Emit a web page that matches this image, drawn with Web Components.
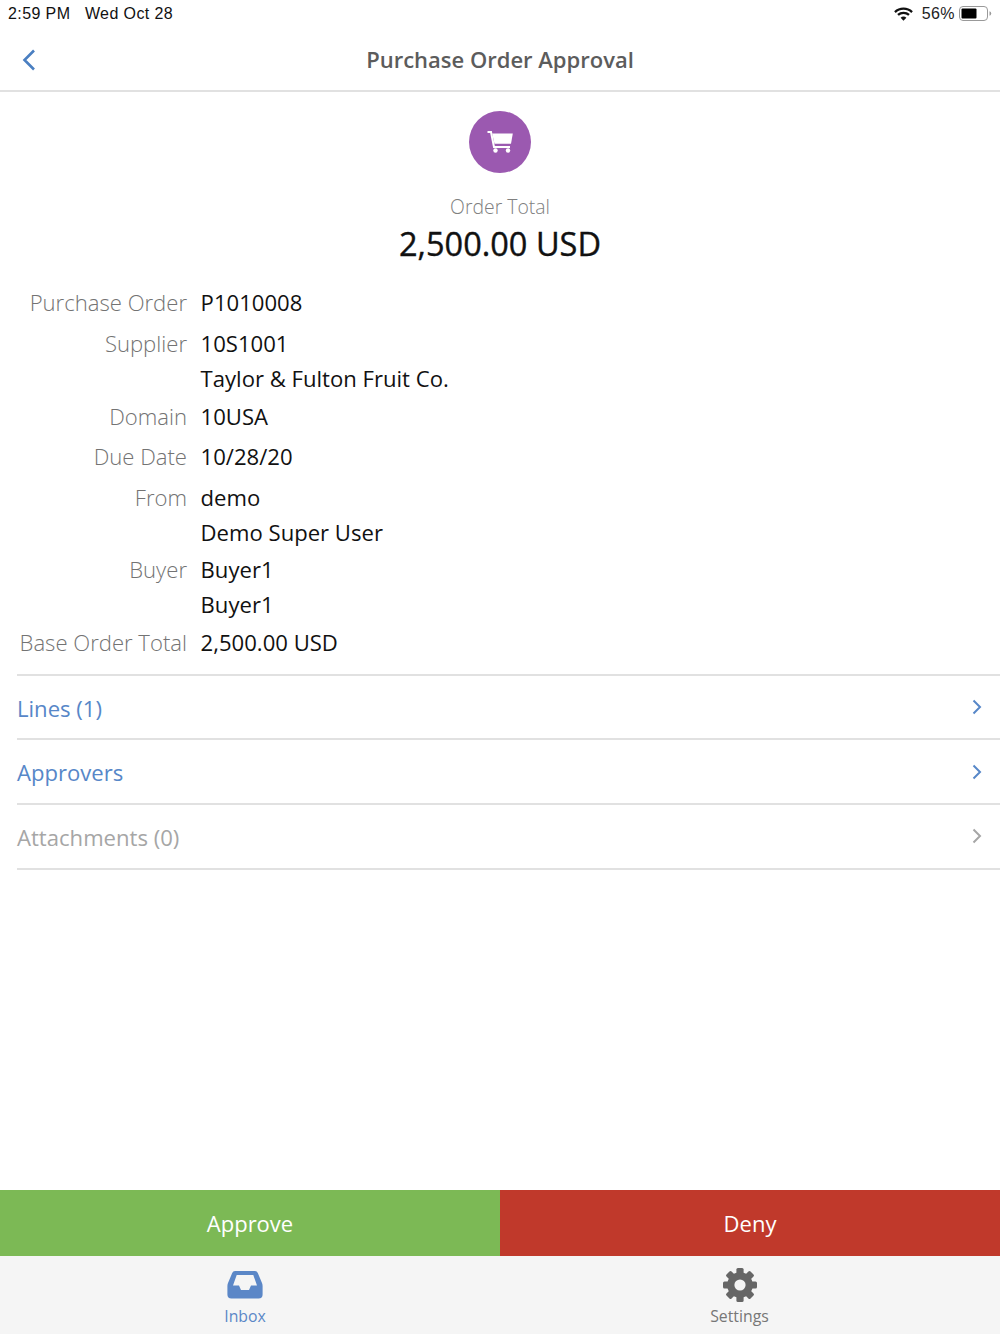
<!DOCTYPE html>
<html>
<head>
<meta charset="utf-8">
<title>Purchase Order Approval</title>
<style>
  html, body { margin: 0; height: 100%; background: #fff; }
  body { font-family: "Open Sans", sans-serif; }
  approval-screen { height: 1334px; }
</style>
</head>
<body>
<approval-screen>
  <status-bar slot="top"></status-bar>
  <nav-header slot="top" title="Purchase Order Approval"></nav-header>
  <order-summary slot="top" label="Order Total" total="2,500.00 USD"></order-summary>
  <detail-list slot="top">
    <detail-row label="Purchase Order"><div>P1010008</div></detail-row>
    <detail-row label="Supplier" two-line><div>10S1001</div><div>Taylor &amp; Fulton Fruit Co.</div></detail-row>
    <detail-row label="Domain"><div>10USA</div></detail-row>
    <detail-row label="Due Date"><div>10/28/20</div></detail-row>
    <detail-row label="From" two-line><div>demo</div><div>Demo Super User</div></detail-row>
    <detail-row label="Buyer" two-line><div>Buyer1</div><div>Buyer1</div></detail-row>
    <detail-row label="Base Order Total"><div>2,500.00 USD</div></detail-row>
  </detail-list>
  <link-row slot="top">Lines (1)</link-row>
  <link-row slot="top">Approvers</link-row>
  <link-row slot="top" disabled last>Attachments (0)</link-row>
  <action-bar slot="bottom"></action-bar>
  <tab-bar slot="bottom"></tab-bar>
</approval-screen>

<script>
class ApprovalScreen extends HTMLElement {
    constructor() {
        super();
        this.attachShadow({mode: 'open'});
        this.shadowRoot.innerHTML = `
        <style>
            :host { display: flex; flex-direction: column; justify-content: space-between; background: #fff; }
            div { display: flex; flex-direction: column; }
        </style>
        <div><slot name="top"></slot></div>
        <div><slot name="bottom"></slot></div>`;
    }
}

class StatusBar extends HTMLElement {
    constructor() {
        super();
        this.attachShadow({mode: 'open'});
        this.shadowRoot.innerHTML = `
        <style>
            :host { display: flex; justify-content: space-between; align-items: center; height: 27px; padding: 0 8px 0 8px;
                font: 16px "Liberation Sans", Arial, sans-serif; color: #111; letter-spacing: .4px; }
            .left { display: flex; gap: 14.5px; }
            .right { display: flex; align-items: center; }
            .wifi { margin-right: 9px; }
            .pct { margin-right: 4px; color: #222; }
        </style>
        <div class="left"><span>2:59 PM</span><span>Wed Oct 28</span></div>
        <div class="right">
            <svg class="wifi" width="19" height="14" viewBox="0 0 20 14">
                <path d="M1 5 A13 13 0 0 1 19 5" fill="none" stroke="#111" stroke-width="2.4"/>
                <path d="M4.2 8 A8.5 8.5 0 0 1 15.8 8" fill="none" stroke="#111" stroke-width="2.4"/>
                <path d="M7 11 L10 14 L13 11 A4.2 4.2 0 0 0 7 11 Z" fill="#111"/>
            </svg>
            <span class="pct">56%</span>
            <svg width="33" height="15" viewBox="0 0 33 15">
                <rect x=".5" y=".5" width="28" height="14" rx="3.5" fill="none" stroke="#999"/>
                <rect x="2.5" y="2.5" width="15" height="10" rx="1" fill="#000"/>
                <path d="M30.5 5.2 A2.4 2.4 0 0 1 30.5 9.8 Z" fill="#999"/>
            </svg>
        </div>`;
    }
}

class NavHeader extends HTMLElement {
    constructor() {
        super();
        this.attachShadow({mode: 'open'});
        this.shadowRoot.innerHTML = `
        <style>
            :host { display: flex; align-items: center; justify-content: center; position: relative; box-sizing: border-box;
                height: 65px; border-bottom: 2px solid #e1e1e1; }
            h1 { margin: 0; font: 600 22px "Open Sans", sans-serif; color: #5c5c5c; }
            svg { position: absolute; left: 22px; top: 22px; }
        </style>
        <svg width="14" height="22" viewBox="0 0 14 22"><path d="M12 1.5 L2.5 11 L12 20.5" fill="none" stroke="#4a7fc1" stroke-width="2.6"/></svg>
        <h1></h1>`;
    }
    connectedCallback() {
        this.shadowRoot.querySelector('h1').textContent = this.getAttribute('title');
    }
}

class OrderSummary extends HTMLElement {
    constructor() {
        super();
        this.attachShadow({mode: 'open'});
        this.shadowRoot.innerHTML = `
        <style>
            :host { display: flex; flex-direction: column; align-items: center; padding-top: 19px; }
            .circle { width: 62px; height: 62px; border-radius: 50%; background: #9b59b0; display: flex; align-items: center; justify-content: center; }
            .label { margin-top: 20px; font: 300 19.4px/28px "Open Sans", sans-serif; color: #808080; }
            .total { margin-top: 1px; font: 400 32.5px/44px "Open Sans", sans-serif; color: #111; -webkit-text-stroke: .4px #111; }
        </style>
        <div class="circle">
            <svg width="26" height="22" viewBox="0 0 26 22">
                <path d="M0.5 1 H4 L7 16 H23" fill="none" stroke="#fff" stroke-width="2"/>
                <path d="M5.2 2.5 H25.8 L24 12.8 H7.5 Z" fill="#fff"/>
                <circle cx="8.5" cy="19.5" r="2.2" fill="#fff"/>
                <circle cx="21" cy="19.5" r="2.2" fill="#fff"/>
            </svg>
        </div>
        <div class="label"></div>
        <div class="total"></div>`;
    }
    connectedCallback() {
        this.shadowRoot.querySelector('.label').textContent = this.getAttribute('label');
        this.shadowRoot.querySelector('.total').textContent = this.getAttribute('total');
    }
}

class DetailList extends HTMLElement {
    constructor() {
        super();
        this.attachShadow({mode: 'open'});
        this.shadowRoot.innerHTML = `
        <style>
            :host { display: flex; flex-direction: column; padding-top: 19.4px; }
            .rule { margin: 8px 0 0 17px; border-bottom: 2px solid #e1e1e1; }
        </style>
        <slot></slot>
        <div class="rule"></div>`;
    }
}

class DetailRow extends HTMLElement {
    constructor() {
        super();
        this.attachShadow({mode: 'open'});
        this.shadowRoot.innerHTML = `
        <style>
            :host { display: grid; grid-template-columns: 187px 1fr; column-gap: 13.6px; padding-bottom: 5.5px;
                font: 22.1px/35px "Open Sans", sans-serif; color: #111; }
            :host([two-line]) { padding-bottom: 2.8px; }
            .label { text-align: right; font-weight: 300; color: #737373; white-space: nowrap; }
        </style>
        <div class="label"></div>
        <div><slot></slot></div>`;
    }
    connectedCallback() {
        this.shadowRoot.querySelector('.label').textContent = this.getAttribute('label');
    }
}

class LinkRow extends HTMLElement {
    constructor() {
        super();
        this.attachShadow({mode: 'open'});
        this.shadowRoot.innerHTML = `
        <style>
            :host { display: block; padding-left: 17px; font: 22.1px "Open Sans", sans-serif; color: #5787c8; }
            :host([disabled]) { color: #a6a6a6; }
            .row { box-sizing: border-box; height: 64.6px; display: flex; align-items: center; justify-content: space-between;
                padding-right: 18px; border-bottom: 2px solid #e1e1e1; }
            :host([last]) .row { height: 65px; }
            span { padding-top: 1px; }
        </style>
        <div class="row">
            <span><slot></slot></span>
            <svg width="10" height="16" viewBox="0 0 10 16"><path d="M1.5 1.5 L8 8 L1.5 14.5" fill="none" stroke="currentColor" stroke-width="2"/></svg>
        </div>`;
    }
}

class ActionBar extends HTMLElement {
    constructor() {
        super();
        this.attachShadow({mode: 'open'});
        this.shadowRoot.innerHTML = `
        <style>
            :host { display: grid; grid-template-columns: 1fr 1fr; height: 66px; font: 22px "Open Sans", sans-serif; color: #fff; }
            div { display: flex; align-items: center; justify-content: center; }
            .approve { background: #7cb955; }
            .deny { background: #c0392b; }
        </style>
        <div class="approve">Approve</div>
        <div class="deny">Deny</div>`;
    }
}

class TabBar extends HTMLElement {
    constructor() {
        super();
        this.attachShadow({mode: 'open'});
        this.shadowRoot.innerHTML = `
        <style>
            :host { display: grid; grid-template-columns: 490px 1fr; height: 78px; padding-right: 11px; background: #f5f5f5;
                font: 15.8px/20px "Open Sans", sans-serif; color: #777; }
            .tab { display: flex; flex-direction: column; align-items: center; padding-top: 12px; box-sizing: border-box; }
            .tab svg { display: block; }
            .tab span { margin-top: 4px; }
            .active { color: #5b87c7; }
        </style>
        <div class="tab active">
            <svg width="36" height="34" viewBox="0 0 36 34">
                <path fill="#5b87c7" fill-rule="evenodd" d="M8 3 H28 Q30 3 30.8 5 L35 15 Q35.6 16.4 35.6 18 V26.5 Q35.6 30.5 31.6 30.5 H4.4 Q.4 30.5 .4 26.5 V18 Q.4 16.4 1 15 L5.2 5 Q6 3 8 3 Z M9.7 7 L6 17.5 H12 L14 22 H22 L24 17.5 H30 L26.3 7 Z"/>
            </svg>
            <span>Inbox</span>
        </div>
        <div class="tab">
            <svg width="36" height="34" viewBox="-18 -17 36 34">
                <g fill="#666">
                    <rect x="-3.6" y="-17" width="7.2" height="34" rx="1.5"/>
                    <rect x="-3.6" y="-17" width="7.2" height="34" rx="1.5" transform="rotate(45)"/>
                    <rect x="-3.6" y="-17" width="7.2" height="34" rx="1.5" transform="rotate(90)"/>
                    <rect x="-3.6" y="-17" width="7.2" height="34" rx="1.5" transform="rotate(135)"/>
                    <circle r="12.8"/>
                </g>
                <circle r="5.6" fill="#f5f5f5"/>
            </svg>
            <span>Settings</span>
        </div>`;
    }
}

customElements.define('approval-screen', ApprovalScreen);
customElements.define('status-bar', StatusBar);
customElements.define('nav-header', NavHeader);
customElements.define('order-summary', OrderSummary);
customElements.define('detail-list', DetailList);
customElements.define('detail-row', DetailRow);
customElements.define('link-row', LinkRow);
customElements.define('action-bar', ActionBar);
customElements.define('tab-bar', TabBar);
</script>
</body>
</html>
